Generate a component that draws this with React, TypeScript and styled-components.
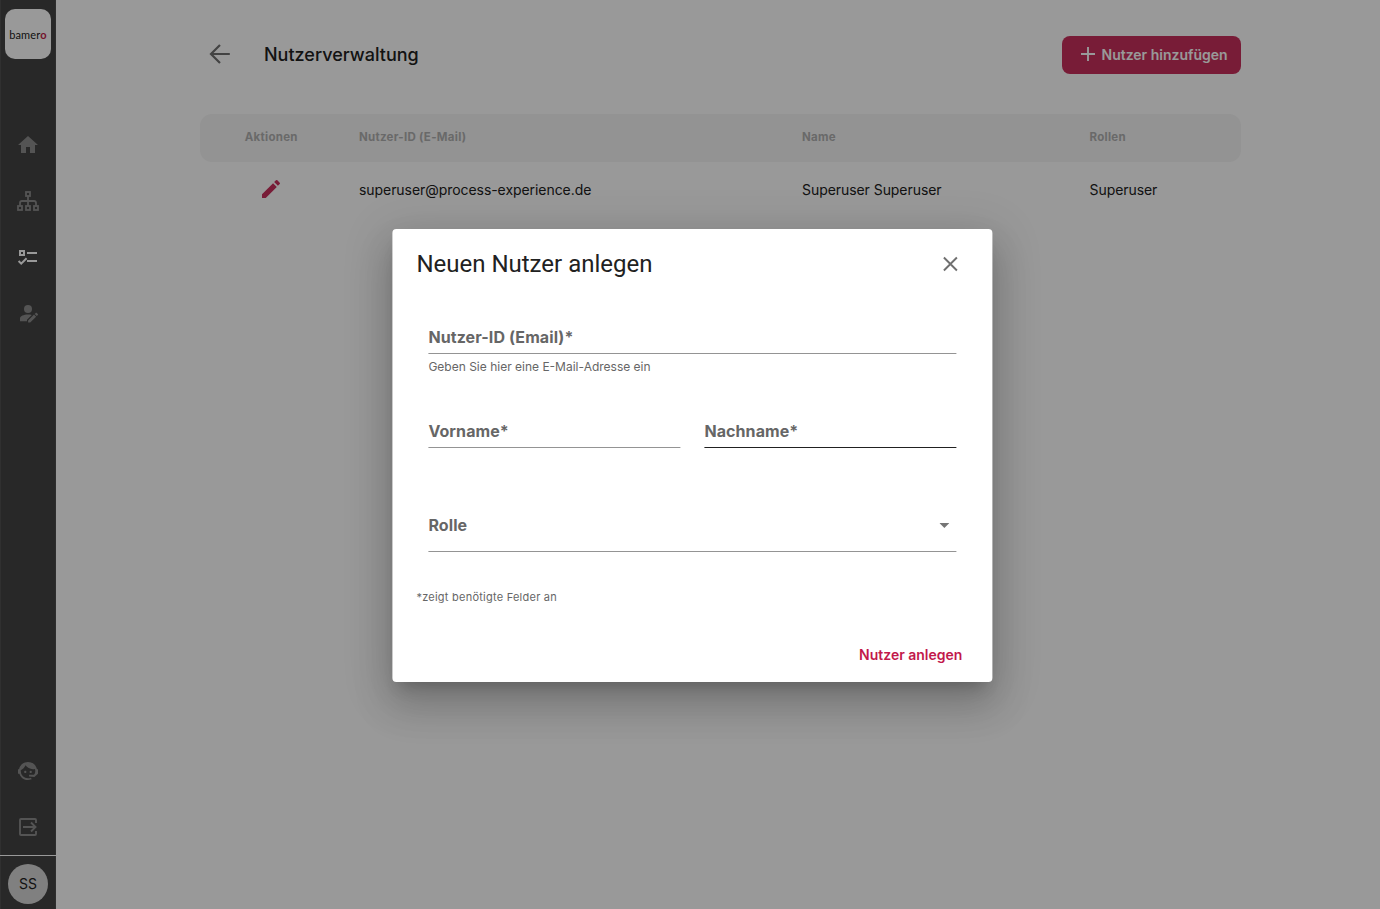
import React from 'react';
import styled, { createGlobalStyle } from 'styled-components';
import { MdHome, MdEdit } from 'react-icons/md';

const GlobalStyle = createGlobalStyle`
  * { box-sizing: border-box; }
  body { margin: 0; background: #fff; font-family: Inter, 'Liberation Sans', sans-serif; color: #212121; }
  button { font: inherit; border: 0; padding: 0; background: none; cursor: pointer; }
`;

const Page = styled.div`
  display: flex;
  height: 909px;
  overflow: hidden;
`;

const Sidebar = styled.nav`
  width: 56px;
  flex: none;
  display: flex;
  flex-direction: column;
  background: #434343;
  border-left: 1px solid #505050;
  border-right: 1px solid #4e4e4e;
`;

const Logo = styled.div`
  width: 46px;
  height: 50px;
  margin: 9px 4px 0;
  border-radius: 10px;
  background: #fff;
  display: flex;
  align-items: center;
  justify-content: center;
  font: 400 11px Lato, sans-serif;
  letter-spacing: 0.1px;
  color: #222;
  span { color: #c21f4b; font-weight: 700; }
`;

const NavList = styled.div<{ $top: string }>`
  display: flex;
  flex-direction: column;
  margin-top: ${(p) => p.$top};
`;

const NavItem = styled.button<{ $active?: boolean }>`
  height: 56px;
  display: flex;
  align-items: center;
  justify-content: center;
  color: ${(p) => (p.$active ? '#fff' : '#8c8c8c')};
`;

const UserArea = styled.div`
  height: 54px;
  margin: 0 -1px;
  border-top: 1px solid #fff;
  display: flex;
  justify-content: center;
  padding-top: 8px;
`;

const Avatar = styled.div`
  width: 40px;
  height: 40px;
  padding-bottom: 1px;
  border-radius: 50%;
  background: #d5d5d5;
  display: flex;
  align-items: center;
  justify-content: center;
  font-size: 14px;
`;

const Main = styled.main`
  width: 1041px;
  margin-left: 144px;
`;

const Header = styled.header`
  display: flex;
  align-items: center;
  height: 38px;
  margin-top: 35.500px;
  padding-left: 8px;
`;

const BackButton = styled.button`
  display: flex;
  padding-bottom: 1px;
  color: #707070;
`;

const PageTitle = styled.h1`
  margin: 0 auto 0 32px;
  font-size: 18px;
  font-weight: 500;
`;

const AddButton = styled.button`
  display: flex;
  align-items: center;
  width: 179px;
  height: 38px;
  padding: 0 0 1px 18px;
  gap: 5.500px;
  border-radius: 8px;
  background: #c9305c;
  color: #fff;
  && { font-size: 14px; font-weight: 600; }
`;

const Table = styled.div`
  margin-top: 40px;
`;

const TableRow = styled.div<{ $head?: boolean }>`
  display: grid;
  grid-template-columns: 159px 443px 287.5px 1fr;
  align-items: center;
  height: ${(p) => (p.$head ? '48px' : '56px')};
  padding-bottom: 1px;
  border-radius: 12px;
  background: ${(p) => (p.$head ? '#f5f5f5' : 'none')};
  color: ${(p) => (p.$head ? '#b0b0b0' : '#212121')};
  font-size: ${(p) => (p.$head ? '11.5px' : '14px')};
  font-weight: ${(p) => (p.$head ? 700 : 400)};
  letter-spacing: ${(p) => (p.$head ? '0.28px' : '-0.06px')};
`;

const ActionCell = styled.div`
  display: flex;
  justify-content: center;
  padding-right: 16.500px;
  svg { color: #c9305c; }
`;

const Backdrop = styled.div`
  position: absolute;
  inset: 0;
  height: 909px;
  background: rgba(0, 0, 0, 0.4);
  display: flex;
  align-items: flex-start;
  padding: 229px 0 0 392px;
`;

const Dialog = styled.section`
  width: 600px;
  height: 453px;
  border-radius: 4px;
  background: #fff;
  box-shadow: 0 11px 15px -7px rgba(0, 0, 0, 0.2), 0 24px 38px 3px rgba(0, 0, 0, 0.14),
    0 9px 46px 8px rgba(0, 0, 0, 0.12);
  display: flex;
  flex-direction: column;
  transform: translateX(0.4px);
`;

const DialogHeader = styled.div`
  display: flex;
  align-items: center;
  justify-content: space-between;
  height: 70px;
  padding: 0 30px 0 24px;
`;

const DialogTitle = styled.h2`
  margin: 0;
  font: 400 24px Roboto, sans-serif;
`;

const CloseButton = styled.button`
  display: flex;
  color: #707070;
`;

const Form = styled.form`
  display: grid;
  grid-template-columns: 1fr 1fr;
  column-gap: 24px;
  padding: 23px 36px 0;
`;

const Field = styled.div<{ $wide?: boolean; $height: number }>`
  grid-column: ${(p) => (p.$wide ? '1 / -1' : 'auto')};
  height: ${(p) => p.$height}px;
`;

const Control = styled.div<{ $focus?: boolean; $pad?: number }>`
  display: flex;
  align-items: center;
  justify-content: space-between;
  height: ${(p) => 32 + (p.$pad ?? 0)}px;
  padding: 0 7px ${(p) => 2 + (p.$pad ?? 0)}px 0;
  border-bottom: 1px solid ${(p) => (p.$focus ? '#212121' : '#949494')};
  color: #666;
  font-size: 16px;
  font-weight: 700;
  letter-spacing: 0.09px;
  svg { margin-top: 2px; }
`;

const Helper = styled.p`
  margin: 3px 0 0;
  font-size: 12px;
  line-height: 19px;
  color: #666;
`;

const Required = styled.p`
  margin: 0 0 0 24px;
  font-size: 11px;
  line-height: 18px;
  letter-spacing: 0.24px;
  color: #666;
`;

const SubmitButton = styled.button`
  align-self: flex-end;
  margin: 40px 30px 0 0;
  color: #c2184b;
  && { font-size: 14px; font-weight: 600; }
  line-height: 18px;
`;

const Stroke = ({ size, width, children }: { size: number; width: number; children: React.ReactNode }) => (
  <svg width={size} height={size} viewBox={`0 0 ${size} ${size}`} fill="none" stroke="currentColor" strokeWidth={width}>
    {children}
  </svg>
);

const SitemapIcon = () => (
  <Stroke size={24} width={1.8}>
    <rect x="10" y="3" width="4" height="4" />
    <rect x="2" y="17" width="4" height="4" />
    <rect x="10" y="17" width="4" height="4" />
    <rect x="18" y="17" width="4" height="4" />
    <path d="M12 7v10M4 17v-3q0-2 2-2h12q2 0 2 2v3" />
  </Stroke>
);

const ChecklistIcon = () => (
  <Stroke size={24} width={2}>
    <path d="M4 6h4v4H4zM11 8h10M11 16h10M2.600 16l2.600 2.600 5.400-5.400" />
  </Stroke>
);

const UserEditIcon = () => (
  <svg width="24" height="24" viewBox="0 0 24 24" fill="currentColor">
    <circle cx="12" cy="8" r="4" />
    <path d="M12 13.500c-4.400 0-8 1.700-8 3.900v2.800h7v-1.500l4.800-4.800C14.700 13.700 13.400 13.500 12 13.500zM21.800 12.900l-1-1c-.3-.3-.8-.3-1.100 0l-1 1 2.100 2.100 1-1c.3-.3.3-.8 0-1.100zM18 13.600l-5.900 5.900v2.100h2.100l5.900-5.900z" />
  </svg>
);

const AgentIcon = () => (
  <svg width="24" height="24" viewBox="0 0 24 24" fill="currentColor">
    <path d="M18.72,14.76C19.07,13.91 19.26,13 19.26,12C19.26,11.28 19.15,10.59 18.96,9.95C18.31,10.1 17.63,10.18 16.92,10.18C13.86,10.18 11.15,8.67 9.5,6.34C8.61,8.5 6.91,10.26 4.77,11.22C4.73,11.47 4.73,11.74 4.73,12A7.27,7.27 0 0,0 12,19.27C13.05,19.27 14.06,19.04 14.97,18.63C15.54,19.72 15.8,20.26 15.78,20.26C14.14,20.81 12.87,21.08 12,21.08C9.58,21.08 7.27,20.13 5.57,18.42C4.53,17.38 3.76,16.11 3.33,14.73H2V10.18H3.09C3.93,6.04 7.6,2.92 12,2.92C14.4,2.92 16.71,3.87 18.42,5.58C19.69,6.84 20.54,8.45 20.89,10.18H22V14.73H21.94L18.38,18L13.08,17.4V15.73H17.91L18.72,14.76M9.27,11.77C9.57,11.77 9.86,11.89 10.07,12.11C10.28,12.32 10.4,12.61 10.4,12.91C10.4,13.21 10.28,13.5 10.07,13.71C9.86,13.92 9.57,14.04 9.27,14.04C8.64,14.04 8.13,13.54 8.13,12.91C8.13,12.28 8.64,11.77 9.27,11.77M14.72,11.77C15.35,11.77 15.85,12.28 15.85,12.91C15.85,13.54 15.35,14.04 14.72,14.04C14.09,14.04 13.58,13.54 13.58,12.91A1.14,1.14 0 0,1 14.72,11.77Z" />
  </svg>
);

const ExitIcon = () => (
  <Stroke size={24} width={1.9}>
    <path d="M20 8V5q0-1-1-1H5Q4 4 4 5v14q0 1 1 1h14q1 0 1-1v-3M7 12h12.500M15 7.500l4.500 4.500-4.500 4.500" />
  </Stroke>
);

export default function App() {
  return (
    <>
      <GlobalStyle />
      <Page>
        <Sidebar>
          <Logo><div>bamer<span>o</span></div></Logo>
          <NavList $top="58px">
            <NavItem><MdHome size={24} /></NavItem>
            <NavItem><SitemapIcon /></NavItem>
            <NavItem $active><ChecklistIcon /></NavItem>
            <NavItem><UserEditIcon /></NavItem>
          </NavList>
          <NavList $top="auto">
            <NavItem><AgentIcon /></NavItem>
            <NavItem><ExitIcon /></NavItem>
          </NavList>
          <UserArea><Avatar>SS</Avatar></UserArea>
        </Sidebar>
        <Main>
          <Header>
            <BackButton>
              <Stroke size={24} width={2.2}>
                <path d="M21.800 12H3.500M12 3L3 12l9 9" />
              </Stroke>
            </BackButton>
            <PageTitle>Nutzerverwaltung</PageTitle>
            <AddButton>
              <Stroke size={16} width={1.9}><path d="M8 1v14M1 8h14" /></Stroke>
              Nutzer hinzufügen
            </AddButton>
          </Header>
          <Table>
            <TableRow $head>
              <ActionCell>Aktionen</ActionCell>
              <div>Nutzer-ID (E-Mail)</div>
              <div>Name</div>
              <div>Rollen</div>
            </TableRow>
            <TableRow>
              <ActionCell><MdEdit size={24} /></ActionCell>
              <div>superuser@process-experience.de</div>
              <div>Superuser Superuser</div>
              <div>Superuser</div>
            </TableRow>
          </Table>
        </Main>
      </Page>
      <Backdrop>
        <Dialog>
          <DialogHeader>
            <DialogTitle>Neuen Nutzer anlegen</DialogTitle>
            <CloseButton>
              <Stroke size={24} width={1.9}><path d="M5.500 5.500l13 13M18.500 5.500l-13 13" /></Stroke>
            </CloseButton>
          </DialogHeader>
          <Form>
            <Field $wide $height={94}>
              <Control>Nutzer-ID (Email)*</Control>
              <Helper>Geben Sie hier eine E-Mail-Adresse ein</Helper>
            </Field>
            <Field $height={94}><Control>Vorname*</Control></Field>
            <Field $height={94}><Control $focus>Nachname*</Control></Field>
            <Field $wide $height={78}>
              <Control $pad={10}>
                Rolle
                <svg width="10" height="5" viewBox="0 0 10 5" fill="#757575"><path d="M0 0h10L5 5z" /></svg>
              </Control>
            </Field>
          </Form>
          <Required>*zeigt benötigte Felder an</Required>
          <SubmitButton>Nutzer anlegen</SubmitButton>
        </Dialog>
      </Backdrop>
    </>
  );
}
